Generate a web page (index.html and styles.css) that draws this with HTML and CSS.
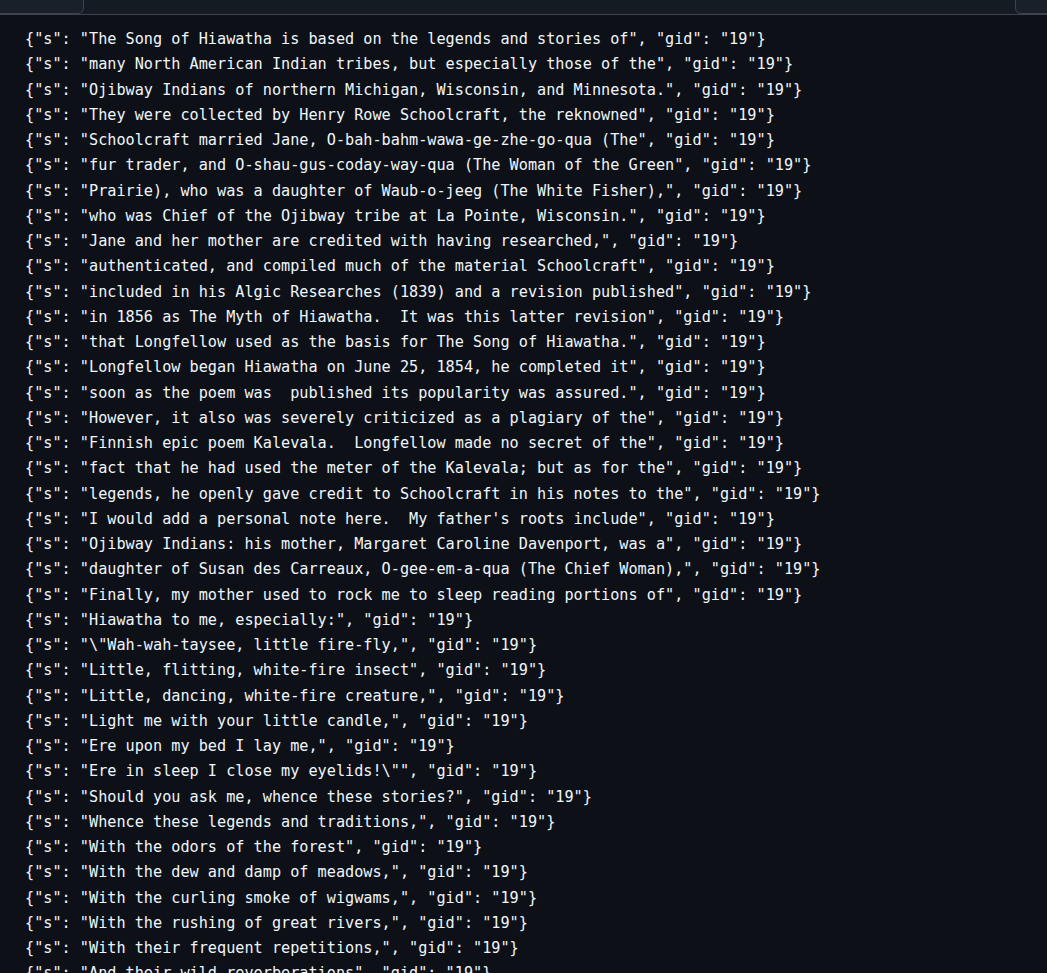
FILE: index.html
```html
<!DOCTYPE html>
<html>
<head>
<meta charset="utf-8">
<link rel="stylesheet" href="styles.css">
</head>
<body>
<div class="topbar">
  <div class="tab tab-left"></div>
  <div class="tab tab-right"></div>
</div>
<pre class="code">{"s": "The Song of Hiawatha is based on the legends and stories of", "gid": "19"}
{"s": "many North American Indian tribes, but especially those of the", "gid": "19"}
{"s": "Ojibway Indians of northern Michigan, Wisconsin, and Minnesota.", "gid": "19"}
{"s": "They were collected by Henry Rowe Schoolcraft, the reknowned", "gid": "19"}
{"s": "Schoolcraft married Jane, O-bah-bahm-wawa-ge-zhe-go-qua (The", "gid": "19"}
{"s": "fur trader, and O-shau-gus-coday-way-qua (The Woman of the Green", "gid": "19"}
{"s": "Prairie), who was a daughter of Waub-o-jeeg (The White Fisher),", "gid": "19"}
{"s": "who was Chief of the Ojibway tribe at La Pointe, Wisconsin.", "gid": "19"}
{"s": "Jane and her mother are credited with having researched,", "gid": "19"}
{"s": "authenticated, and compiled much of the material Schoolcraft", "gid": "19"}
{"s": "included in his Algic Researches (1839) and a revision published", "gid": "19"}
{"s": "in 1856 as The Myth of Hiawatha.  It was this latter revision", "gid": "19"}
{"s": "that Longfellow used as the basis for The Song of Hiawatha.", "gid": "19"}
{"s": "Longfellow began Hiawatha on June 25, 1854, he completed it", "gid": "19"}
{"s": "soon as the poem was  published its popularity was assured.", "gid": "19"}
{"s": "However, it also was severely criticized as a plagiary of the", "gid": "19"}
{"s": "Finnish epic poem Kalevala.  Longfellow made no secret of the", "gid": "19"}
{"s": "fact that he had used the meter of the Kalevala; but as for the", "gid": "19"}
{"s": "legends, he openly gave credit to Schoolcraft in his notes to the", "gid": "19"}
{"s": "I would add a personal note here.  My father's roots include", "gid": "19"}
{"s": "Ojibway Indians: his mother, Margaret Caroline Davenport, was a", "gid": "19"}
{"s": "daughter of Susan des Carreaux, O-gee-em-a-qua (The Chief Woman),", "gid": "19"}
{"s": "Finally, my mother used to rock me to sleep reading portions of", "gid": "19"}
{"s": "Hiawatha to me, especially:", "gid": "19"}
{"s": "\"Wah-wah-taysee, little fire-fly,", "gid": "19"}
{"s": "Little, flitting, white-fire insect", "gid": "19"}
{"s": "Little, dancing, white-fire creature,", "gid": "19"}
{"s": "Light me with your little candle,", "gid": "19"}
{"s": "Ere upon my bed I lay me,", "gid": "19"}
{"s": "Ere in sleep I close my eyelids!\"", "gid": "19"}
{"s": "Should you ask me, whence these stories?", "gid": "19"}
{"s": "Whence these legends and traditions,", "gid": "19"}
{"s": "With the odors of the forest", "gid": "19"}
{"s": "With the dew and damp of meadows,", "gid": "19"}
{"s": "With the curling smoke of wigwams,", "gid": "19"}
{"s": "With the rushing of great rivers,", "gid": "19"}
{"s": "With their frequent repetitions,", "gid": "19"}
{"s": "And their wild reverberations", "gid": "19"}</pre>
</body>
</html>
```
FILE: styles.css
```css
html, body {
  margin: 0;
  padding: 0;
  background: #0d1117;
  height: 100%;
  overflow: hidden;
}

.topbar {
  height: 14px;
  background: #151b23;
  border-bottom: 1px solid #3d444d;
  display: flex;
  justify-content: space-between;
  overflow: hidden;
}

.tab {
  height: 20px;
  margin-top: -8px;
  border: 1px solid #3d444d;
  border-radius: 6px;
  background: #1a2029;
}

.tab-left {
  width: 100px;
  margin-left: -18px;
}

.tab-right {
  width: 60px;
  margin-right: -30px;
}

.code {
  margin: 0;
  padding: 12px 0 0 25px;
  font-family: "DejaVu Sans Mono", monospace;
  font-size: 15.2px;
  line-height: 25.25px;
  color: #f0f6fc;
  white-space: pre;
}
```
